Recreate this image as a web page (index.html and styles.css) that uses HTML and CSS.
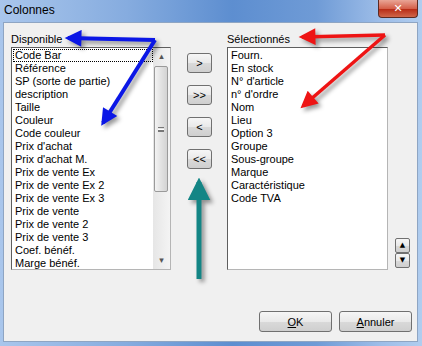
FILE: index.html
```html
<!DOCTYPE html>
<html lang="fr">
<head>
    <meta charset="UTF-8">
    <title>Colonnes</title>
    <link rel="stylesheet" href="styles.css">
</head>
<body>
<div class="window">
    <div class="titlebar">
        <span class="title">Colonnes</span>
        <div class="close">&#x2715;</div>
    </div>
    <div class="client">
        <div class="main-row">
            <div class="column col-left">
                <div class="label">Disponible</div>
                <div class="listbox">
                    <ul class="items">
                        <li class="focused">Code Bar</li>
                        <li>Référence</li>
                        <li>SP (sorte de partie)</li>
                        <li>description</li>
                        <li>Taille</li>
                        <li>Couleur</li>
                        <li>Code couleur</li>
                        <li>Prix d'achat</li>
                        <li>Prix d'achat M.</li>
                        <li>Prix de vente Ex</li>
                        <li>Prix de vente Ex 2</li>
                        <li>Prix de vente Ex 3</li>
                        <li>Prix de vente</li>
                        <li>Prix de vente 2</li>
                        <li>Prix de vente 3</li>
                        <li>Coef. bénéf.</li>
                        <li>Marge bénéf.</li>
                    </ul>
                    <div class="scrollbar">
                        <div class="sb-arrow">&#x25B4;</div>
                        <div class="sb-track">
                            <div class="sb-thumb"><span class="grip"></span></div>
                        </div>
                        <div class="sb-arrow">&#x25BE;</div>
                    </div>
                </div>
            </div>

            <div class="move-buttons">
                <button class="btn small">&gt;</button>
                <button class="btn small">&gt;&gt;</button>
                <button class="btn small">&lt;</button>
                <button class="btn small">&lt;&lt;</button>
            </div>

            <div class="column col-right">
                <div class="label">Sélectionnés</div>
                <div class="listbox">
                    <ul class="items">
                        <li>Fourn.</li>
                        <li>En stock</li>
                        <li>N° d'article</li>
                        <li>n° d'ordre</li>
                        <li>Nom</li>
                        <li>Lieu</li>
                        <li>Option 3</li>
                        <li>Groupe</li>
                        <li>Sous-groupe</li>
                        <li>Marque</li>
                        <li>Caractéristique</li>
                        <li>Code TVA</li>
                    </ul>
                </div>
            </div>

            <div class="spin">
                <button class="btn spin-btn">&#x25B2;</button>
                <button class="btn spin-btn">&#x25BC;</button>
            </div>
        </div>

        <div class="footer">
            <button class="btn wide"><u>O</u>K</button>
            <button class="btn wide"><u>A</u>nnuler</button>
        </div>
    </div>

    <!-- annotation arrows drawn over the dialog -->
    <svg class="arrows" width="422" height="346" viewBox="0 0 422 346">
        <defs>
            <marker id="head-blue" viewBox="0 0 10 10" refX="8" refY="5" markerWidth="4.8" markerHeight="4.2" orient="auto">
                <path d="M0,0 L10,5 L0,10 z" fill="#0b17e6"/>
            </marker>
            <marker id="head-red" viewBox="0 0 10 10" refX="8" refY="5" markerWidth="5.5" markerHeight="4.8" orient="auto">
                <path d="M0,0 L10,5 L0,10 z" fill="#ee1414"/>
            </marker>
            <marker id="head-teal" viewBox="0 0 10 10" refX="8" refY="5" markerWidth="4.5" markerHeight="4.6" orient="auto">
                <path d="M0,0 L10,5 L0,10 z" fill="#138585"/>
            </marker>
        </defs>
        <g class="arrow">
            <path d="M155,40 L68,38" stroke="#0b17e6" stroke-width="4" fill="none" marker-end="url(#head-blue)"/>
            <path d="M155,40 L103,123" stroke="#0b17e6" stroke-width="4" fill="none" marker-end="url(#head-blue)"/>
        </g>
        <g class="arrow">
            <path d="M385,35 L302,37" stroke="#ee1414" stroke-width="3.5" fill="none" marker-end="url(#head-red)"/>
            <path d="M385,35 L303,106" stroke="#ee1414" stroke-width="3.5" fill="none" marker-end="url(#head-red)"/>
        </g>
        <g class="arrow">
            <path d="M199,279 L199,182" stroke="#138585" stroke-width="5" fill="none" marker-end="url(#head-teal)"/>
        </g>
    </svg>
</div>
</body>
</html>
```

FILE: styles.css
```css
body {
    margin: 0;
    font-family: "Liberation Sans", Arial, sans-serif;
    font-size: 11px;
    color: #000;
}
.window {
    position: relative;
    width: 422px;
    height: 346px;
    box-sizing: border-box;
    padding: 0 4px 4px 3px;
    background: linear-gradient(to right, #a9c6ec, #86acdf 30%, #5d8ed0 55%, #6f9bd6 75%, #9dbde8 90%, #b0cdef);
    display: flex;
    flex-direction: column;
}
.titlebar {
    position: relative;
    height: 22px;
    display: flex;
    align-items: center;
}
.title {
    font-size: 12px;
    margin-left: 1px;
    margin-top: -3px;
    color: #000;
}
.close {
    position: absolute;
    right: 0;
    top: 0;
    width: 40px;
    height: 18px;
    box-sizing: border-box;
    border: 1px solid #5c2a22;
    border-top: none;
    border-radius: 0 0 4px 4px;
    background: linear-gradient(#e9a596, #d5604a 50%, #b82d17 55%, #d0664a);
    color: #fff;
    font-size: 11px;
    font-weight: bold;
    text-align: center;
    line-height: 17px;
    font-family: "DejaVu Sans", sans-serif;
}
.client {
    flex: 1;
    background-color: #f0f0f0;
    border: 1px solid #8ea5c3;
    padding: 10px 5px 0 7px;
    display: flex;
    flex-direction: column;
}
.main-row {
    display: flex;
    align-items: stretch;
}
.column {
    display: flex;
    flex-direction: column;
}
.col-left {
    width: 160px;
}
.col-right {
    width: 161px;
}
.label {
    height: 14px;
    line-height: 12px;
}
.listbox {
    height: 223px;
    box-sizing: border-box;
    border: 1px solid #5e5e5e;
    border-right-color: #b5b5b5;
    border-bottom-color: #b5b5b5;
    background-color: #fff;
    display: flex;
}
.items {
    flex: 1;
    list-style: none;
    margin: 0;
    padding: 1px 0 0 1px;
}
.items li {
    height: 13px;
    line-height: 13px;
    padding-left: 2px;
    white-space: nowrap;
    overflow: hidden;
}
.items li.focused {
    outline: 1px dotted #000;
    outline-offset: -1px;
}
.scrollbar {
    width: 17px;
    display: flex;
    flex-direction: column;
    background: linear-gradient(to right, #e6e6e6, #f4f4f4);
}
.sb-arrow {
    height: 17px;
    line-height: 17px;
    text-align: center;
    color: #555;
    font-size: 9px;
    font-family: "DejaVu Sans", sans-serif;
}
.sb-track {
    flex: 1;
}
.sb-thumb {
    height: 126px;
    margin: 1px 0 0 1px;
    width: 14px;
    box-sizing: border-box;
    border: 1px solid #9a9a9a;
    border-radius: 2px;
    background: linear-gradient(to right, #f3f3f3, #e2e2e2 50%, #d3d3d3);
    display: flex;
    align-items: center;
    justify-content: center;
}
.grip {
    width: 6px;
    height: 5px;
    border-top: 1px solid #777;
    border-bottom: 1px solid #777;
    box-sizing: border-box;
    background: linear-gradient(#fff 1px, #777 1px, #777 2px, transparent 2px);
    background-position: 0 1px;
    background-repeat: no-repeat;
}
.btn {
    font-family: "Liberation Sans", Arial, sans-serif;
    font-size: 11px;
    color: #000;
    border: 1px solid #707070;
    border-radius: 3px;
    background: linear-gradient(#f6f6f6, #e9e9e9 50%, #d9d9d9 52%, #cfcfcf);
    padding: 0;
    box-sizing: border-box;
}
.move-buttons {
    display: flex;
    flex-direction: column;
    gap: 12px;
    margin: 20px 15px 0 16px;
}
.btn.small {
    width: 25px;
    height: 20px;
}
.spin {
    display: flex;
    flex-direction: column;
    align-self: flex-end;
    margin: 0 0 2px 7px;
}
.btn.spin-btn {
    width: 15px;
    height: 15px;
    border-radius: 2px;
    font-size: 7px;
    line-height: 13px;
    font-family: "DejaVu Sans", sans-serif;
}
.footer {
    display: flex;
    justify-content: flex-end;
    gap: 7px;
    margin-top: 41px;
}
.btn.wide {
    width: 73px;
    height: 21px;
}
.arrows {
    position: absolute;
    left: 0;
    top: 0;
    pointer-events: none;
}
.arrow {
    filter: drop-shadow(3px 3px 2px rgba(0, 0, 0, 0.4));
}
```
